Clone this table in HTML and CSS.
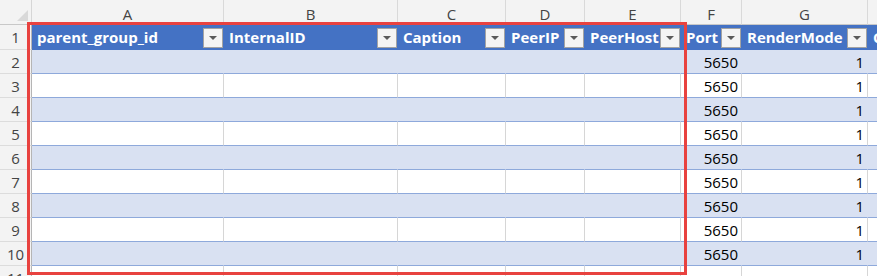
FILE: index.html
```html
<!DOCTYPE html>
<html>
<head>
<meta charset="utf-8">
<link rel="stylesheet" href="styles.css">
</head>
<body>
<div class="sheet">
  <div class="row">
    <div class="corner"><span class="tri"></span></div>
    <div class="colhead">A</div><div class="colhead">B</div><div class="colhead">C</div><div class="colhead">D</div><div class="colhead">E</div><div class="colhead">F</div><div class="colhead">G</div><div class="colhead">H</div>
  </div>
  <div class="row">
    <div class="rowhead">1</div>
    <div class="th"><span class="lbl">parent_group_id</span><span class="filter"></span></div>
    <div class="th"><span class="lbl">InternalID</span><span class="filter"></span></div>
    <div class="th"><span class="lbl">Caption</span><span class="filter"></span></div>
    <div class="th"><span class="lbl">PeerIP</span><span class="filter"></span></div>
    <div class="th"><span class="lbl">PeerHost</span><span class="filter"></span></div>
    <div class="th"><span class="lbl">Port</span><span class="filter"></span></div>
    <div class="th"><span class="lbl">RenderMode</span><span class="filter"></span></div>
    <div class="th"><span class="lbl">ColorDepth</span><span class="filter"></span></div>
  </div>
  <div class="row band"><div class="rowhead">2</div><div class="td"></div><div class="td"></div><div class="td"></div><div class="td"></div><div class="td"></div><div class="td num">5650</div><div class="td num">1</div><div class="td"></div></div>
  <div class="row plain"><div class="rowhead">3</div><div class="td"></div><div class="td"></div><div class="td"></div><div class="td"></div><div class="td"></div><div class="td num">5650</div><div class="td num">1</div><div class="td"></div></div>
  <div class="row band"><div class="rowhead">4</div><div class="td"></div><div class="td"></div><div class="td"></div><div class="td"></div><div class="td"></div><div class="td num">5650</div><div class="td num">1</div><div class="td"></div></div>
  <div class="row plain"><div class="rowhead">5</div><div class="td"></div><div class="td"></div><div class="td"></div><div class="td"></div><div class="td"></div><div class="td num">5650</div><div class="td num">1</div><div class="td"></div></div>
  <div class="row band"><div class="rowhead">6</div><div class="td"></div><div class="td"></div><div class="td"></div><div class="td"></div><div class="td"></div><div class="td num">5650</div><div class="td num">1</div><div class="td"></div></div>
  <div class="row plain"><div class="rowhead">7</div><div class="td"></div><div class="td"></div><div class="td"></div><div class="td"></div><div class="td"></div><div class="td num">5650</div><div class="td num">1</div><div class="td"></div></div>
  <div class="row band"><div class="rowhead">8</div><div class="td"></div><div class="td"></div><div class="td"></div><div class="td"></div><div class="td"></div><div class="td num">5650</div><div class="td num">1</div><div class="td"></div></div>
  <div class="row plain"><div class="rowhead">9</div><div class="td"></div><div class="td"></div><div class="td"></div><div class="td"></div><div class="td"></div><div class="td num">5650</div><div class="td num">1</div><div class="td"></div></div>
  <div class="row band"><div class="rowhead">10</div><div class="td"></div><div class="td"></div><div class="td"></div><div class="td"></div><div class="td"></div><div class="td num">5650</div><div class="td num">1</div><div class="td"></div></div>
  <div class="row empty"><div class="rowhead">11</div><div class="td"></div><div class="td"></div><div class="td"></div><div class="td"></div><div class="td"></div><div class="td"></div><div class="td"></div><div class="td"></div></div>
</div>
<div class="annot"></div>
</body>
</html>
```

FILE: styles.css
```css
html, body {
  margin: 0;
  padding: 0;
  background: #ffffff;
  overflow: hidden;
}

body {
  font-family: "Open Sans", "Noto Sans", sans-serif;
  font-size: 15px;
  color: #000;
}

.sheet {
  display: grid;
  grid-template-columns: 32px 192px 174px 108px 79px 96px 61px 126px 120px;
  grid-template-rows: 25px 25px repeat(10, 24px);
  width: 988px;
}

.row {
  display: contents;
}

.row > div {
  box-sizing: border-box;
  min-width: 0;
  overflow: hidden;
  white-space: nowrap;
}

.corner {
  background: #f3f3f3;
  border-right: 1px solid #d6d6d6;
  border-bottom: 1px solid #c8c8c8;
  position: relative;
}

.tri {
  position: absolute;
  right: 3px;
  bottom: 3px;
  width: 0;
  height: 0;
  border-left: 11px solid transparent;
  border-bottom: 11px solid #d9d9d9;
}

.colhead {
  background: #f3f3f3;
  color: #444444;
  text-align: center;
  line-height: 20px;
  padding-top: 4px;
  border-right: 1px solid #d9d9d9;
  border-bottom: 1px solid #c8c8c8;
}

.rowhead {
  background: #f3f3f3;
  color: #444444;
  text-align: center;
  line-height: 20px;
  padding-top: 2px;
  border-right: 1px solid #b5b5b5;
  border-bottom: 1px solid #dcdcdc;
}

.th {
  background: #4472c4;
  color: #ffffff;
  font-weight: 700;
  font-size: 15px;
  display: flex;
  align-items: flex-start;
  justify-content: space-between;
  padding: 0 1px 0 5px;
}

.th .lbl {
  line-height: 20px;
  padding-top: 2px;
}

.filter {
  flex: 0 0 auto;
  box-sizing: border-box;
  width: 20px;
  height: 20px;
  margin-top: 3px;
  background: #f4f4f4;
  border: 1px solid #a3a3a3;
  position: relative;
}

.filter::after {
  content: "";
  position: absolute;
  left: 5px;
  top: 7px;
  width: 0;
  height: 0;
  border-left: 4px solid transparent;
  border-right: 4px solid transparent;
  border-top: 4px solid #5a5a5a;
}

.td {
  line-height: 20px;
  padding: 2px 3px 0 5px;
  border-bottom: 1px solid #8ea9db;
}

.band .td {
  background: #d9e1f2;
  border-right: 1px solid #d9e1f2;
}

.plain .td {
  background: #ffffff;
  border-right: 1px solid #d6d6d6;
}

.empty .td {
  background: #ffffff;
  border-right: 1px solid #d6d6d6;
  border-bottom: 1px solid #d6d6d6;
}

.num {
  text-align: right;
}

.annot {
  position: absolute;
  left: 27px;
  top: 22px;
  width: 660px;
  height: 253px;
  box-sizing: border-box;
  border: 3px solid #e8423f;
}
```
